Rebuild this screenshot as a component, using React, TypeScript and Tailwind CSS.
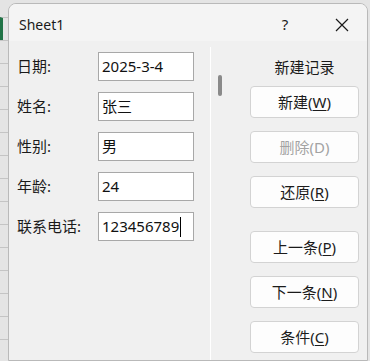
import React from 'react';

const fields = [
  { label: '日期:', value: '2025-3-4' },
  { label: '姓名:', value: '张三' },
  { label: '性别:', value: '男' },
  { label: '年龄:', value: '24' },
  { label: '联系电话:', value: '123456789', caret: true },
];

const font = { fontFamily: '"Noto Sans", "Noto Sans CJK SC", sans-serif' };

const Btn: React.FC<{ text: string; hot?: string; disabled?: boolean; className?: string }> = ({ text, hot, disabled, className }) => (
  <button
    className={`h-[32px] w-[109px] rounded-[4px] border border-[#d3d3d3] bg-[#fdfdfd] text-[15px] leading-none flex items-center justify-center ${
      disabled ? 'text-[#a3a3a3]' : 'text-[#1b1b1b]'
    } ${className ?? ''}`}
  >
    {text}(
    {hot ? <span className={disabled ? '' : 'underline underline-offset-2'}>{hot}</span> : null})
  </button>
);

export default function App() {
  const rows = Array.from({ length: 16 });
  return (
    <div className="w-[370px] h-[361px] overflow-hidden bg-[#e4e4e4] flex" style={font}>
      {/* spreadsheet edge behind the dialog */}
      <div className="w-[8px] shrink-0 flex flex-col pt-[17px]">
        {rows.map((_, i) => (
          <div
            key={i}
            className={`h-[23px] shrink-0 border-t border-[#c4c4c4] ${i === 0 ? 'border-l-[3px] border-l-[#217346]' : ''}`}
          />
        ))}
      </div>

      <div className="mt-[3px] w-[360px] shrink-0 rounded-t-[8px] border border-[#b9b9b9] bg-[#f0f0f0] flex flex-col overflow-hidden">
        {/* title bar */}
        <div className="h-[37px] shrink-0 bg-[#f4f4f4] flex items-center pt-[4px] pl-[10px] text-[14px] text-[#1a1a1a]">
          <span>Sheet1</span>
          <span className="ml-auto w-[20px] text-center text-[15px]">?</span>
          <svg className="ml-[40px] mr-[18px]" width="14" height="14" viewBox="0 0 14 14">
            <path d="M1 1L13 13M13 1L1 13" stroke="#1a1a1a" strokeWidth="1.2" />
          </svg>
        </div>

        {/* body */}
        <div className="flex flex-1">
          <div className="w-[201px] shrink-0 flex flex-col gap-[11px] pt-[11px] pl-[8px]">
            {fields.map(f => (
              <div key={f.label} className="flex items-center h-[29px]">
                <span className="w-[81px] text-[15px] text-[#1a1a1a]">{f.label}</span>
                <div className="w-[96px] h-[29px] bg-white border border-[#a8a8a8] flex items-center pl-[3px] text-[15px] text-[#111]">
                  <span>{f.value}</span>
                  {f.caret ? <span className="ml-[1px] w-px h-[20px] bg-black" /> : null}
                </div>
              </div>
            ))}
          </div>

          <div className="mt-[6px] w-px shrink-0 bg-white" />

          <div className="w-[39px] shrink-0 pl-[7px] pt-[34px]">
            <div className="w-[4px] h-[21px] rounded-full bg-[#8a8a8a]" />
          </div>

          <div className="flex flex-col items-start">
            <div className="w-[109px] text-center text-[15px] text-[#1a1a1a] pt-[15px] h-[45px]">新建记录</div>
            <Btn text="新建" hot="W" />
            <Btn text="删除" hot="D" disabled className="mt-[13px]" />
            <Btn text="还原" hot="R" className="mt-[13px]" />
            <Btn text="上一条" hot="P" className="mt-[23px]" />
            <Btn text="下一条" hot="N" className="mt-[13px]" />
            <Btn text="条件" hot="C" className="mt-[13px]" />
          </div>
        </div>
      </div>
    </div>
  );
}
